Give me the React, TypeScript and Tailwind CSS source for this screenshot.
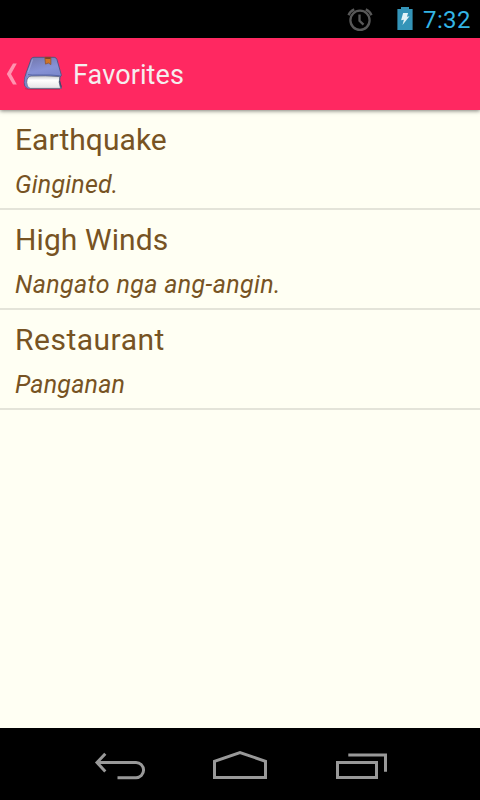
const favorites = [
    { term: 'Earthquake', translation: 'Gingined.', termClass: 'tracking-[0.05px]', translationClass: 'tracking-[0.2px]' },
    { term: 'High Winds', translation: 'Nangato nga ang-angin.', termClass: 'tracking-[0.1px]', translationClass: 'tracking-[0.38px]' },
    { term: 'Restaurant', translation: 'Panganan', termClass: 'tracking-[0.5px]', translationClass: 'tracking-[0.2px]' },
];

function AlarmIcon() {
    return (
        <svg width="26" height="26" viewBox="0 0 26 26" fill="none" stroke="#585858" strokeWidth="2.3">
            <circle cx="13" cy="13.3" r="9.6" />
            <path d="M12.5 7.6v6.2l4 3.8" />
            <path d="M1.6 8.2Q3 4.4 7.2 2.4M24.4 8.2Q23 4.4 18.8 2.4" strokeWidth="2.5" />
        </svg>
    );
}

function BatteryIcon() {
    return (
        <svg width="16" height="24" viewBox="0 0 16 24">
            <path d="M4 0h8v2H15.6V23H.4V2H4z" fill="#3494b8" />
            <path d="M6.1 6.1h5L9.9 9.7l2.6-.4-7 8.8 1.4-5.3-2.8.5z" fill="#e3f3f8" />
        </svg>
    );
}

function BookIcon() {
    return (
        <svg width="42" height="38" viewBox="0 0 42 38">
            <defs>
                <linearGradient id="cover" x1="0" y1="0" x2="0.3" y2="1">
                    <stop offset="0" stopColor="#7075a8" />
                    <stop offset="0.5" stopColor="#8792d6" />
                    <stop offset="1" stopColor="#7280c4" />
                </linearGradient>
                <linearGradient id="pages" x1="0" y1="0" x2="0" y2="1">
                    <stop offset="0" stopColor="#c4c4ca" />
                    <stop offset="0.35" stopColor="#ffffff" />
                    <stop offset="1" stopColor="#e4e4e6" />
                </linearGradient>
            </defs>
            <path d="M3 33.6Q5 34.8 10 34.5H38" stroke="#a51f4c" strokeWidth="1" fill="none" opacity="0.5" />
            <path
                d="M9.3 3.5Q10.2 2.3 12 2.3H32.2Q34.3 2.4 35 4.6L39.2 19.5Q39.7 21.4 38 21.8Q37 26 38.8 30.8L39.4 33.2H6Q2.2 32.6 2.3 27.5Q2.3 23 4.3 17.5Z"
                fill="url(#cover)"
                stroke="#4e527e"
                strokeWidth="0.9"
            />
            <path d="M37.8 21.6Q36.2 27 38.6 33.4H8Q4.6 32.4 4.7 27.5Q4.8 21.5 9 21Q24 20.2 37.8 21.6Z" fill="url(#pages)" stroke="#60637e" strokeWidth="0.8" />
            <path d="M4.6 20.5Q3 23.5 3.4 28Q3.8 32 7 33" fill="none" stroke="#7885cb" strokeWidth="1.5" />
            <path d="M6 19.6Q9 20.3 17 20Q29 19.6 38.2 20.8" fill="none" stroke="#5866a8" strokeWidth="1" />
            <path d="M10.5 4.4Q8.5 11 6 17" fill="none" stroke="#a3acdf" strokeWidth="1.2" opacity="0.7" />
            <path d="M22.8 2.3H28.9V9.6L26.4 8L23.5 9.1Z" fill="#d07526" stroke="#8c4d28" strokeWidth="0.7" />
            <path d="M23.2 2.3H28.5V3.9H23.2Z" fill="#763f2a" />
            <path d="M37.5 25.8L39.3 31.8" stroke="#424765" strokeWidth="1.1" />
        </svg>
    );
}

function StatusBar() {
    return (
        <div className="flex h-[38px] items-start justify-end bg-black pr-[9px]">
            <div className="mt-[7px] mr-[24px]">
                <AlarmIcon />
            </div>
            <div className="mt-[7px] mr-[10px]">
                <BatteryIcon />
            </div>
            <span className="mt-[4px] w-[48px] text-2xl leading-8 tracking-[0.4px] text-[#33b5e5]">7:32</span>
        </div>
    );
}

function ActionBar() {
    return (
        <header className="relative z-10 flex h-[72px] items-center bg-[#ff2861] shadow-[0_1px_4px_rgba(0,0,0,0.5)]">
            <svg className="ml-[6px]" width="12" height="24" viewBox="0 0 12 24" fill="#ff93b0">
                <path d="M7 1.5H10.8L5 12l5.8 10.5H7L.8 12z" />
            </svg>
            <div className="ml-[4px]">
                <BookIcon />
            </div>
            <h1 className="mt-[2px] ml-[9px] text-[27px] leading-8 tracking-[0.1px] text-[#f5eeee]">Favorites</h1>
        </header>
    );
}

function NavigationBar() {
    return (
        <nav className="flex h-[72px] items-center justify-center gap-[40px] bg-black">
            <svg width="80" height="72" viewBox="80 728 80 72" fill="none" stroke="#999" strokeWidth="3">
                <path d="M105.3 753.7L97 762.5l8.3 9M97 762.5h39a7.6 7.6 0 0 1 0 15.2h-18.5" />
            </svg>
            <svg width="80" height="72" viewBox="200 728 80 72" fill="none" stroke="#999" strokeWidth="3">
                <path d="M214.5 777.5V761.3L240 752.5l25.5 8.8v16.2z" />
            </svg>
            <svg width="80" height="72" viewBox="320 728 80 72" fill="none" stroke="#999" strokeWidth="3">
                <path d="M337.5 762.5h39v15h-39zM348.3 755h37.2v16.8" />
            </svg>
        </nav>
    );
}

export default function App() {
    return (
        <div className="flex h-[800px] w-[480px] flex-col overflow-hidden bg-[#fffff3] font-[Roboto,sans-serif]">
            <StatusBar />
            <ActionBar />
            <main className="flex-1">
                {favorites.map((item) => (
                    <div key={item.term} className="h-[100px] border-b-2 border-[#e4e4d9] px-[15px] pt-[10px] text-[#775323]">
                        <h2 className={`text-[30px] leading-[40px] ${item.termClass}`}>{item.term}</h2>
                        <p className={`mt-[8px] text-[25px] leading-[34px] italic ${item.translationClass}`}>{item.translation}</p>
                    </div>
                ))}
            </main>
            <NavigationBar />
        </div>
    );
}
